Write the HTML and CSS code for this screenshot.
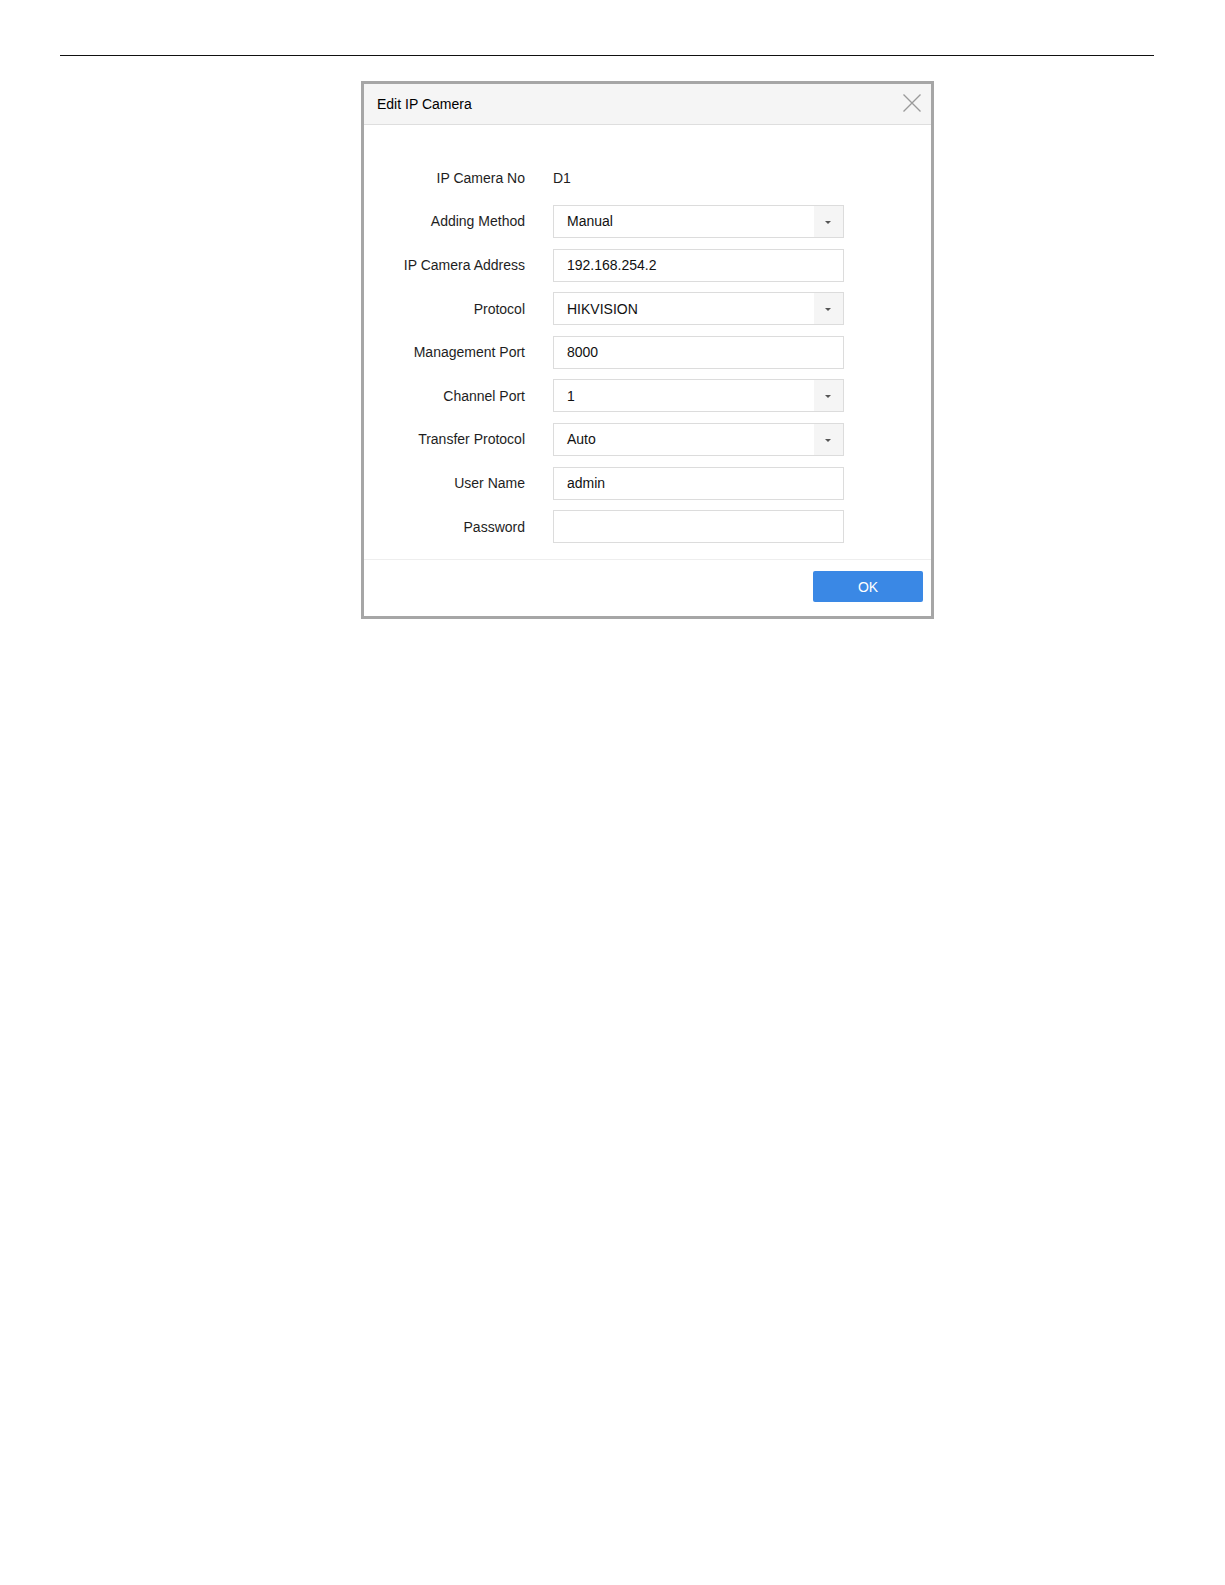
FILE: index.html
```html
<!DOCTYPE html>
<html lang="en">
<head>
    <meta charset="UTF-8">
    <meta name="viewport" content="width=device-width, initial-scale=1.0">
    <title>Edit IP Camera</title>
    <link rel="stylesheet" href="styles.css">
</head>
<body>
    <div class="page">
        <div class="rule"></div>

        <div class="dialog">
            <div class="dialog-header">
                <span class="dialog-title">Edit IP Camera</span>
                <svg class="close" width="18" height="18" viewBox="0 0 18 18">
                    <path d="M0.5 0.5 L17.5 17.5 M17.5 0.5 L0.5 17.5" stroke="#9a9a9a" stroke-width="1.3" fill="none"/>
                </svg>
            </div>

            <div class="dialog-body">
                <div class="form">
                    <label>IP Camera No</label>
                    <div class="value">D1</div>

                    <label>Adding Method</label>
                    <div class="field select">
                        <span class="text">Manual</span>
                        <span class="arrow"></span>
                    </div>

                    <label>IP Camera Address</label>
                    <div class="field"><span class="text">192.168.254.2</span></div>

                    <label>Protocol</label>
                    <div class="field select">
                        <span class="text">HIKVISION</span>
                        <span class="arrow"></span>
                    </div>

                    <label>Management Port</label>
                    <div class="field"><span class="text">8000</span></div>

                    <label>Channel Port</label>
                    <div class="field select">
                        <span class="text">1</span>
                        <span class="arrow"></span>
                    </div>

                    <label>Transfer Protocol</label>
                    <div class="field select">
                        <span class="text">Auto</span>
                        <span class="arrow"></span>
                    </div>

                    <label>User Name</label>
                    <div class="field"><span class="text">admin</span></div>

                    <label>Password</label>
                    <div class="field"><span class="text"></span></div>
                </div>
            </div>

            <div class="dialog-footer">
                <button type="button" class="btn-ok">OK</button>
            </div>
        </div>
    </div>
</body>
</html>
```

FILE: styles.css
```css
body {
    margin: 0;
    background: #fff;
    font-family: "Liberation Sans", Arial, sans-serif;
    font-size: 14px;
    color: #222;
}
.page {
    padding-top: 55px;
}
.rule {
    margin-left: 60px;
    width: 1094px;
    height: 1px;
    background: #111;
}
.dialog {
    margin: 25px 0 0 361px;
    width: 567px;
    border: 3px solid #a6a6a6;
    background: #fff;
}
.dialog-header {
    height: 40px;
    display: flex;
    align-items: center;
    justify-content: space-between;
    padding: 0 10px 0 13px;
    background: #f5f5f5;
    border-bottom: 1px solid #dedede;
}
.dialog-title {
    color: #000;
}
.close {
    display: block;
    margin-top: -2px;
}
.dialog-body {
    padding: 36.4px 0 15.6px;
}
.form {
    display: grid;
    grid-template-columns: 161px 291px;
    grid-auto-rows: 33px;
    column-gap: 28px;
    row-gap: 10.6px;
}
.form label {
    display: flex;
    align-items: center;
    justify-content: flex-end;
    color: #1e1e1e;
}
.value {
    display: flex;
    align-items: center;
    color: #1e1e1e;
}
.field {
    display: flex;
    align-items: stretch;
    box-sizing: border-box;
    border: 1px solid #dcdcdc;
    background: #fff;
}
.field .text {
    flex: 1;
    display: flex;
    align-items: center;
    padding-left: 13px;
    color: #111;
}
.arrow {
    width: 29px;
    background: #f5f5f5;
    position: relative;
}
.arrow::after {
    content: "";
    position: absolute;
    left: 11px;
    top: 15px;
    border-left: 3px solid transparent;
    border-right: 3px solid transparent;
    border-top: 3px solid #555;
}
.dialog-footer {
    display: flex;
    justify-content: flex-end;
    padding: 11px 8px 14px;
    border-top: 1px solid #eeeeee;
}
.btn-ok {
    width: 110px;
    height: 31px;
    padding-top: 3px;
    border: none;
    border-radius: 2px;
    background: #3a88e5;
    color: #fff;
    font-family: "Liberation Sans", Arial, sans-serif;
    font-size: 14px;
}
```
